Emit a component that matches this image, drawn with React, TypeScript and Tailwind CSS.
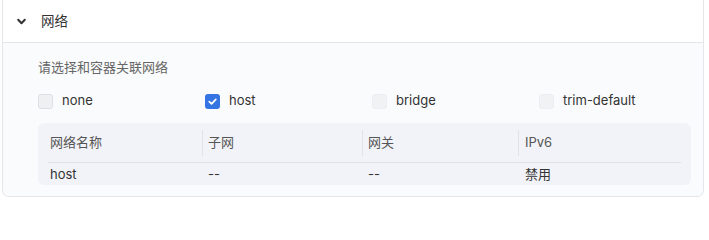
import React from "react";

const font = { fontFamily: '"Inter", "Noto Sans CJK SC", sans-serif' };

function Box({ checked, dim }: { checked?: boolean; dim?: boolean }) {
  if (checked) {
    return (
      <span className="flex h-[15px] w-[15px] items-center justify-center rounded-[3px] bg-[#3574e3]">
        <svg width="11" height="11" viewBox="0 0 12 12" fill="none">
          <path d="M2.5 6.2 L5 8.6 L9.6 3.6" stroke="white" strokeWidth="1.9" strokeLinecap="round" strokeLinejoin="round" />
        </svg>
      </span>
    );
  }
  return (
    <span
      className={
        dim
          ? "h-[15px] w-[15px] rounded-[3px] border border-[#eceef1] bg-[#f1f2f4]"
          : "h-[15px] w-[15px] rounded-[3px] border border-[#dcdfe4] bg-[#eff0f2]"
      }
    />
  );
}

export default function App() {
  const opts = [
    { l: "none" },
    { l: "host", c: true },
    { l: "bridge", d: true },
    { l: "trim-default", d: true },
  ];
  return (
    <div className="w-[709px] h-[207px] bg-white pl-[2px] pr-[5px] pb-[9px]" style={font}>
      <div className="rounded-b-[7px] border border-t-0 border-[#e4e6ea] overflow-hidden">
        <div className="flex h-[43px] items-center border-b border-[#e4e6ea] bg-white pl-[13px]">
          <svg width="11" height="11" viewBox="0 0 10 10" fill="none" className="mt-[1px]">
            <path d="M2 3.5 L5 6.5 L8 3.5" stroke="#333" strokeWidth="1.9" strokeLinecap="round" strokeLinejoin="round" />
          </svg>
          <span className="ml-[14px] text-[13.5px] text-[#333]">网络</span>
        </div>
        <div className="bg-[#fafbfc] pl-[35px] pr-[12px] pb-[11px]">
          <div className="pt-[14px] h-[37px] text-[13px] leading-[20px] text-[#666]">请选择和容器关联网络</div>
          <div className="grid grid-cols-[167px_167px_167px_1fr] h-[42px] items-center">
            {opts.map((o) => (
              <div key={o.l} className="flex items-center gap-[9px]">
                <Box checked={o.c} dim={o.d} />
                <span className="text-[13px] text-[#333]">{o.l}</span>
              </div>
            ))}
          </div>
          <div className="mt-[1px] rounded-[6px] bg-[#f2f3f8] px-[10px]">
            <div className="grid grid-cols-[154px_160px_156px_1fr] h-[40px] items-center border-b border-[#dfe1e7] text-[13px] text-[#555]">
              <div className="pl-[2px]">网络名称</div>
              <div className="flex h-[26px] items-center border-l border-[#e1e3e8] pl-[5px]">子网</div>
              <div className="flex h-[26px] items-center border-l border-[#e1e3e8] pl-[5px]">网关</div>
              <div className="flex h-[26px] items-center border-l border-[#e1e3e8] pl-[6px]">IPv6</div>
            </div>
            <div className="grid grid-cols-[154px_160px_156px_1fr] h-[22px] pt-[2px] items-center text-[13px] text-[#333]">
              <div className="pl-[2px]">host</div>
              <div className="pl-[6px]">--</div>
              <div className="pl-[6px]">--</div>
              <div className="pl-[7px]">禁用</div>
            </div>
          </div>
        </div>
      </div>
    </div>
  );
}
